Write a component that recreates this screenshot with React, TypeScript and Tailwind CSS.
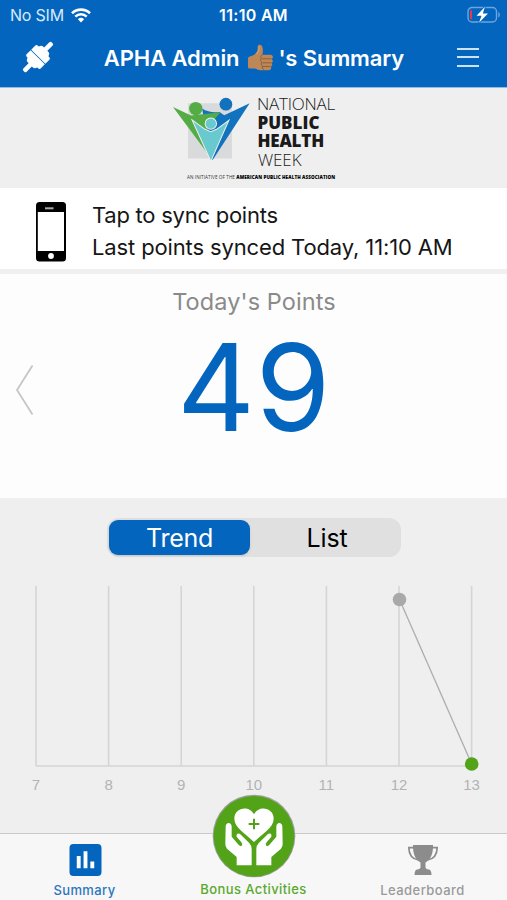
const days = [7, 8, 9, 10, 11, 12, 13];

function StatusBar() {
  return (
    <div className="flex h-[30px] items-center justify-between px-[7px] text-white">
      <div className="flex w-[160px] items-center gap-[7px] pl-[3px]">
        <span className="text-[16px] leading-[20px] tracking-[-0.2px] text-[#d8eafa]">No SIM</span>
        <svg width="20" height="15" viewBox="0 0 20 15" fill="none" stroke="white" strokeWidth="2.6">
          <path d="M1 5.2a13 13 0 0 1 18 0" />
          <path d="M4.3 8.6a8.2 8.2 0 0 1 11.4 0" />
          <path d="M6.9 11.2a4.5 4.5 0 0 1 6.2 0L10 14.4z" fill="white" stroke="none" />
        </svg>
      </div>
      <span className="text-[16px] font-semibold leading-[20px] tracking-[0.3px]">11:10 AM</span>
      <div className="flex w-[160px] justify-end">
        <svg width="33" height="18" viewBox="0 0 33 18">
          <rect x="1" y="1.5" width="28.5" height="14.5" rx="4" fill="none" stroke="#6ea5dc" strokeWidth="1.4" />
          <path d="M31.3 6v5.5q1.6-.8 1.6-2.75T31.3 6" fill="#6ea5dc" />
          <rect x="3" y="4" width="2" height="9.5" rx="1" fill="#e2394b" />
          <path
            d="M18 .8 9.5 9.8h5l-2.5 7 9-9.2h-5.2z"
            fill="white"
            stroke="#0365bd"
            strokeWidth="1.5"
            paintOrder="stroke"
          />
        </svg>
      </div>
    </div>
  );
}

function Plug() {
  return (
    <svg className="overflow-visible" width="32" height="32" viewBox="0 0 32 32" fill="white">
      <g transform="rotate(45 16 16)">
        <rect x="13.7" y="-4" width="4.6" height="12" rx="1.6" />
        <path d="M6 15.6V9.8q0-1.2 1.2-1.5l2-.3 1-2q.7-1 2-1h7.600q1.300 0 2 1l1 2 2 .3q1.200.3 1.200 1.500v5.800z" />
        <path d="M6 16.400v5.800q0 1.200 1.200 1.500l2 .3 1 2q.7 1 2 1h7.600q1.300 0 2-1l1-2 2-.3q1.200-.3 1.200-1.500v-5.800z" />
        <rect x="13.7" y="24" width="4.6" height="12" rx="1.6" />
      </g>
    </svg>
  );
}

function Thumb() {
  return (
    <svg width="27" height="28" viewBox="0 0 28 28">
      <path
        d="M1 14.5q0-1.7 1.7-2c3.6-.7 6.4-2.5 7.8-5.4C11.5 5 10.7 3 11.2 1.5c.7-1.8 3.7-1.6 4.5.4 1 2.6 1 5.6.2 8.7h8.3c3 0 3.3 3.5 1.5 4.4 1.6 1.1 1.3 3.5-.2 4.2 1.2 1.2.7 3.2-.8 3.8.9 1.7-.1 3.6-2.2 3.6h-8.3c-3.2 0-4.2-1.5-6.4-1.7L2.8 25Q1 25 1 23z"
        fill="#bd8757"
      />
      <path
        d="M16 10.8c-1.8.7-2.4 2.3-1.1 3.5-1.4 1.3-.9 3.3.4 4.1-1 1.4-.5 3 .8 3.8-.7 1.6 0 3.2 1.4 4M15.5 14.8h10M15.8 19h9.5M16.5 22.8h7.8"
        fill="none"
        stroke="#7e5635"
        strokeWidth="0.8"
      />
      <path d="M12.7 2q.3 4.5-2.7 8.2" fill="none" stroke="#d5a273" strokeWidth="1.2" />
    </svg>
  );
}

function Header() {
  return (
    <header className="h-[88px] border-b border-[#8fbbe4] bg-[#0365bd]">
      <StatusBar />
      <div className="flex h-[54px] items-center justify-between pl-[22px] pr-[28px]">
        <Plug />
        <h1 className="flex items-center whitespace-nowrap pr-[3px] pt-[2px] text-[22px] font-semibold text-white">
          <span className="tracking-[-0.1px]">APHA Admin</span>
          <span className="ml-[8px] mr-[4px]">
            <Thumb />
          </span>
          <span className="tracking-[-0.1px]">'s Summary</span>
        </h1>
        <div className="flex flex-col gap-[6.5px]">
          <div className="h-[2px] w-[22px] bg-[#cce2f6]" />
          <div className="h-[2px] w-[22px] bg-[#cce2f6]" />
          <div className="h-[2px] w-[22px] bg-[#cce2f6]" />
        </div>
      </div>
    </header>
  );
}

function Banner() {
  return (
    <div className="h-[100px] bg-[#efefef] pt-[7px]">
      <div className="flex h-[78px] pl-[173px]">
        <svg className="mt-[1px]" width="77" height="66" viewBox="40 30 230 196">
          <rect x="85" y="51" width="131" height="165" fill="#d9dadb" />
          <path d="M127 67q24 15 52 10l14 10 76-36L158 221l-14-60z" fill="#1172bd" />
          <path d="M40 62 94 88l88-10-40 47 14 93z" fill="#54ac45" />
          <path d="m97 101 39 28 17 7 17-7 37-27-54 122z" fill="#68c9ce" stroke="#efefef" strokeWidth="3" />
          <circle cx="108" cy="67" r="20" fill="#54ac45" />
          <circle cx="198" cy="54" r="19" fill="#1172bd" />
          <circle cx="153" cy="112" r="17" fill="#68c9ce" stroke="#efefef" strokeWidth="3" />
        </svg>
        <div className="ml-[7px] whitespace-nowrap font-['Open_Sans'] text-[17px] leading-[18.5px] text-[#1a1a1a]">
          <div className="tracking-[-0.25px] font-light">NATIONAL</div>
          <div className="pl-[0.5px] font-extrabold">PUBLIC</div>
          <div className="pl-[0.5px] tracking-[-0.2px] font-extrabold">HEALTH</div>
          <div className="pl-[1px] tracking-[-0.1px] font-light">WEEK</div>
        </div>
      </div>
      <div className="whitespace-nowrap pl-[187px] font-['Open_Sans'] text-[4.6px] leading-[8px] tracking-[0.09px] text-[#333]">
        AN INITIATIVE OF THE <b className="font-extrabold text-black">AMERICAN PUBLIC HEALTH ASSOCIATION</b>
      </div>
    </div>
  );
}

function SyncRow() {
  return (
    <div className="flex h-[86px] items-start border-b-[5px] border-[#f0f0f0] bg-white pl-[36px] pt-[12px]">
      <svg className="mt-[2px]" width="30" height="60" viewBox="0 0 30 60">
        <rect width="30" height="59.5" rx="3.5" fill="black" />
        <rect x="1.8" y="10" width="26.2" height="39" fill="white" />
        <rect x="9" y="5.3" width="8.5" height="2" fill="#aaa" />
        <circle cx="15" cy="54" r="2.9" fill="white" />
      </svg>
      <div className="ml-[26px] whitespace-nowrap text-[22px] leading-[31.5px] text-[#161616]">
        <p className="tracking-[-0.25px]">Tap to sync points</p>
        <p className="tracking-[-0.13px]">Last points synced Today, 11:10 AM</p>
      </div>
    </div>
  );
}

function Points() {
  return (
    <section className="flex h-[224px] bg-[#fdfdfd]">
      <svg className="ml-[15px] mt-[90px]" width="20" height="52" viewBox="0 0 20 52">
        <path d="M17.5 1.5 2 26l15.5 24.5" fill="none" stroke="#c6c6c6" strokeWidth="1.8" />
      </svg>
      <div className="mr-[34px] flex-1 pt-[13px] text-center">
        <h2 className="text-[23.5px] leading-[30px] tracking-[0.1px] text-[#8a8a8a]">Today's Points</h2>
        <div className="mt-[10px] text-[121px] leading-[120px] tracking-[0.5px] text-[#0365bd]">49</div>
      </div>
    </section>
  );
}

function Chart() {
  return (
    <svg className="block" width="507" height="230" viewBox="0 570 507 230">
      {days.map((day, i) => (
        <g key={day}>
          <line x1={36 + i * 72.6} x2={36 + i * 72.6} y1="586" y2="766" stroke="#d5d5d5" strokeWidth="1.6" />
          <text
            x={36 + i * 72.6}
            y="790"
            textAnchor="middle"
            fontSize="15"
            fill="#b3b3b3"
            className="font-['Liberation_Sans']"
          >
            {day}
          </text>
        </g>
      ))}
      <line x1="36" x2="471.6" y1="766" y2="766" stroke="#d5d5d5" strokeWidth="1.6" />
      <line x1="399.5" y1="599.5" x2="471.7" y2="764" stroke="#adadad" strokeWidth="1.3" />
      <circle cx="399.5" cy="599.5" r="6.8" fill="#a9a9a9" />
      <circle cx="471.7" cy="764" r="6.8" fill="#53a318" />
    </svg>
  );
}

function Trend() {
  return (
    <section className="h-[335px] bg-[#efefef] pt-[20px]">
      <div className="ml-[107px] flex h-[39px] w-[294px] rounded-[12px] bg-[#e0e0e0] p-[2px] text-[25px] leading-[36px]">
        <div className="w-[141px] rounded-[9px] bg-[#0365bd] text-center tracking-[-0.3px] text-white shadow-sm">
          Trend
        </div>
        <div className="flex-1 pl-[5px] text-center tracking-[-0.1px] text-black">List</div>
      </div>
      <div className="pt-[13px]">
        <Chart />
      </div>
    </section>
  );
}

function Hand() {
  return (
    <path
      d="M107 125c0-15 18-15 18 0v30l22 26q6 5 9 0t-3-11l-12-13c-5-8 3-15 10-9l26 25q8 8 8 19v49h-45v-25l-29-25q-5-6-5-14z"
      fill="white"
    />
  );
}

function BonusIcon() {
  return (
    <svg width="86" height="86" viewBox="63 24 258 258">
      <circle cx="192" cy="153" r="124" fill="#9b9f98" />
      <circle cx="192" cy="154" r="121" fill="#53a318" />
      <path
        d="M192 171C166 145 133 128 133 101c0-33 44-42 59-13 15-29 59-20 59 13 0 27-33 44-59 70z"
        fill="white"
      />
      <path d="M192 101v32M176 117h32" stroke="#53a318" strokeWidth="6" />
      <Hand />
      <g transform="translate(384 0) scale(-1 1)">
        <Hand />
      </g>
    </svg>
  );
}

function TabBar() {
  return (
    <nav className="grid h-[67px] grid-cols-3 border-t border-[#c9c9c9] bg-[#f7f7f7] text-[13px] font-medium leading-[16px]">
      <div className="flex flex-col items-center pt-[10px] text-[#2b76bd]">
        <svg className="ml-[1px]" width="33" height="32" viewBox="0 0 33 33">
          <rect width="33" height="33" rx="4" fill="#0365bd" />
          <path d="M9.5 12.5v12.5M16.5 7.5v17.5M23.5 18v7" stroke="white" strokeWidth="4" />
        </svg>
        <span className="mt-[6px] tracking-[0.4px]">Summary</span>
      </div>
      <div className="relative flex flex-col items-center pt-[47px] text-[#5aa82c]">
        <div className="absolute top-[-41px]">
          <BonusIcon />
        </div>
        <span className="whitespace-nowrap tracking-[0.4px]">Bonus Activities</span>
      </div>
      <div className="flex flex-col items-center pt-[10px] text-[#9a9a9a]">
        <svg width="32" height="32" viewBox="0 0 32 32" fill="#8c8c8c">
          <path d="M6 1h20c.2 9-2.3 14.7-7.5 17.5V23q0 2 3.5 2.5 2.5.7 2.5 5.500h-17q0-4.800 2.500-5.500Q13.500 25 13.500 23v-4.500C8.300 15.700 5.800 10 6 1z" />
          <path
            d="M7 3.7H1.8C2 10.5 5 15 11.5 16M25 3.7h5.200C30 10.5 27 15 20.5 16"
            fill="none"
            stroke="#8c8c8c"
            strokeWidth="1.7"
          />
        </svg>
        <span className="mt-[6px] tracking-[0.45px]">Leaderboard</span>
      </div>
    </nav>
  );
}

export default function App() {
  return (
    <div className="h-[900px] w-[507px] overflow-hidden bg-white font-['Inter',sans-serif]">
      <Header />
      <Banner />
      <SyncRow />
      <Points />
      <Trend />
      <TabBar />
    </div>
  );
}
